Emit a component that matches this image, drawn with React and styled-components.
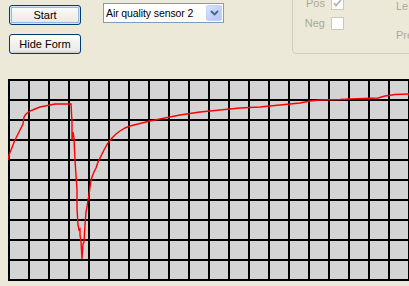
import React from "react";
import styled, { createGlobalStyle } from "styled-components";

const GlobalStyle = createGlobalStyle`
  html, body {
    margin: 0;
    padding: 0;
    background: #ece9d8;
    overflow: hidden;
  }
  body {
    font-family: "Liberation Sans", Arial, sans-serif;
    font-size: 11px;
  }
`;

// sensor trace, in page pixels (shifted to chart space below)
const trace = [
  [8, 160], [9, 155], [11, 150], [13, 145], [15, 140], [17, 136], [19, 132],
  [21, 128], [23, 124], [24, 117], [26, 114], [30, 111], [35, 109], [40, 107],
  [45, 106], [50, 105], [55, 104], [62, 104], [70, 104], [71, 104], [72, 122],
  [72, 140], [73, 132], [74, 138], [75, 160], [76, 175], [77, 190], [77, 208],
  [78, 225], [79, 230], [80, 229], [80, 235], [81, 242], [82, 259], [83, 244],
  [84, 242], [85, 225], [86, 212], [87, 207], [88, 200], [89, 195], [90, 187],
  [91, 181], [92, 177], [94, 172], [96, 168], [98, 162], [101, 156], [104, 150],
  [108, 143], [112, 138], [116, 134], [120, 131], [125, 128], [130, 126],
  [138, 124], [150, 121], [165, 118], [180, 115], [200, 112], [220, 110],
  [240, 108], [260, 107], [280, 105], [290, 104], [300, 103], [310, 101],
  [320, 100], [340, 99.5], [350, 99], [378, 98], [385, 96], [395, 94.5],
  [409, 94],
];

function Chart() {
  const cols = Array.from({ length: 21 }, (_, i) => 1 + i * 20);
  const rows = Array.from({ length: 11 }, (_, i) => 1 + i * 20);
  const pts = trace.map(([x, y]) => `${x - 8},${y - 79}`).join(" ");
  return (
    <ChartBox>
      <svg width="402" height="202" viewBox="0 0 402 202">
        <rect x="0" y="0" width="402" height="202" fill="#d4d4d4" />
        {cols.map((x) => (
          <line key={"c" + x} x1={x} y1="0" x2={x} y2="202" stroke="#000" strokeWidth="2" />
        ))}
        {rows.map((y) => (
          <line key={"r" + y} x1="0" y1={y} x2="402" y2={y} stroke="#000" strokeWidth="2" />
        ))}
        <polyline points={pts} fill="none" stroke="#ff0000" strokeWidth="1.4" strokeLinejoin="miter" />
      </svg>
    </ChartBox>
  );
}

function Check({ checked }) {
  return (
    <CheckBox>
      {checked && (
        <svg width="11" height="11" viewBox="0 0 11 11">
          <path d="M2 5 L4 7.5 L9 2" fill="none" stroke="#b8b4a6" strokeWidth="1.8" />
        </svg>
      )}
    </CheckBox>
  );
}

export default function App() {
  return (
    <Page>
      <GlobalStyle />
      <TopBar>
        <ButtonColumn>
          <Button $default>Start</Button>
          <Button>Hide Form</Button>
        </ButtonColumn>
        <Select>
          <SelectText>Air quality sensor 2</SelectText>
          <DropButton>
            <svg width="9" height="6" viewBox="0 0 9 6">
              <path d="M1 1 L4.5 4.5 L8 1" fill="none" stroke="#4d6185" strokeWidth="1.8" />
            </svg>
          </DropButton>
        </Select>
        <GroupBox>
          <CheckColumn>
            <CheckRow>
              <Label>Pos</Label>
              <Check checked />
            </CheckRow>
            <CheckRow>
              <Label>Neg</Label>
              <Check />
            </CheckRow>
          </CheckColumn>
          <SideColumn>
            <SideLabel>Le</SideLabel>
            <SideLabel>Pre</SideLabel>
          </SideColumn>
        </GroupBox>
      </TopBar>
      <Chart />
    </Page>
  );
}

const Page = styled.div`
  width: 409px;
  height: 286px;
  overflow: hidden;
  display: flex;
  flex-direction: column;
`;

const TopBar = styled.div`
  height: 79px;
  display: flex;
  align-items: flex-start;
  padding-left: 9px;
  box-sizing: border-box;
`;

const ButtonColumn = styled.div`
  flex-shrink: 0;
  display: flex;
  flex-direction: column;
  gap: 9px;
  padding-top: 5px;
`;

const Button = styled.div`
  width: 72px;
  height: 20px;
  box-sizing: border-box;
  border: 1px solid #003c74;
  border-radius: 3px;
  background: linear-gradient(#ffffff, #f4f3ee 40%, #ecebe6 85%, #d6d0c5);
  box-shadow: ${(p) =>
    p.$default
      ? "inset 0 0 0 1px #cee7ff, inset 0 0 0 2px #98b8ea"
      : "inset 0 -1px 0 #d6d0c5"};
  display: flex;
  align-items: center;
  justify-content: center;
  color: #000;
  font-size: 11px;
`;

const Select = styled.div`
  flex-shrink: 0;
  margin-left: 22px;
  margin-top: 3px;
  width: 121px;
  height: 20px;
  box-sizing: border-box;
  border: 1px solid #7f9db9;
  background: #fff;
  display: flex;
  align-items: center;
  padding: 1px;
`;

const SelectText = styled.div`
  flex: 1;
  padding-left: 1px;
  font-size: 10.5px;
  letter-spacing: -0.1px;
  color: #000;
  white-space: nowrap;
  overflow: hidden;
`;

const DropButton = styled.div`
  flex-shrink: 0;
  width: 16px;
  height: 16px;
  border-radius: 2px;
  background: linear-gradient(135deg, #d8e4fd, #bcd0f8 60%, #b2c8f5);
  border: 1px solid #c3d3fd;
  box-sizing: border-box;
  display: flex;
  align-items: center;
  justify-content: center;
`;

const GroupBox = styled.div`
  margin-left: 68px;
  margin-top: -20px;
  width: 150px;
  height: 74px;
  flex-shrink: 0;
  box-sizing: border-box;
  border: 1px solid #d0d0bf;
  border-radius: 4px;
  padding: 16px 0 0 8px;
  display: flex;
`;

const CheckColumn = styled.div`
  display: flex;
  flex-direction: column;
  gap: 7px;
`;

const CheckRow = styled.div`
  display: flex;
  align-items: center;
  gap: 6px;
  height: 13px;
`;

const Label = styled.div`
  width: 24px;
  text-align: right;
  color: #aca899;
  font-size: 11px;
  line-height: 13px;
`;

const CheckBox = styled.div`
  width: 13px;
  height: 13px;
  box-sizing: border-box;
  border: 1px solid #cac8bb;
  background: #fff;
  display: flex;
  align-items: center;
  justify-content: center;
`;

const SideColumn = styled.div`
  margin-left: 52px;
  padding-top: 3px;
  display: flex;
  flex-direction: column;
  gap: 16px;
`;

const SideLabel = styled.div`
  color: #aca899;
  font-size: 11px;
  line-height: 13px;
`;

const ChartBox = styled.div`
  margin-left: 8px;
  width: 401px;
  height: 202px;
  overflow: hidden;
  line-height: 0;
`;
